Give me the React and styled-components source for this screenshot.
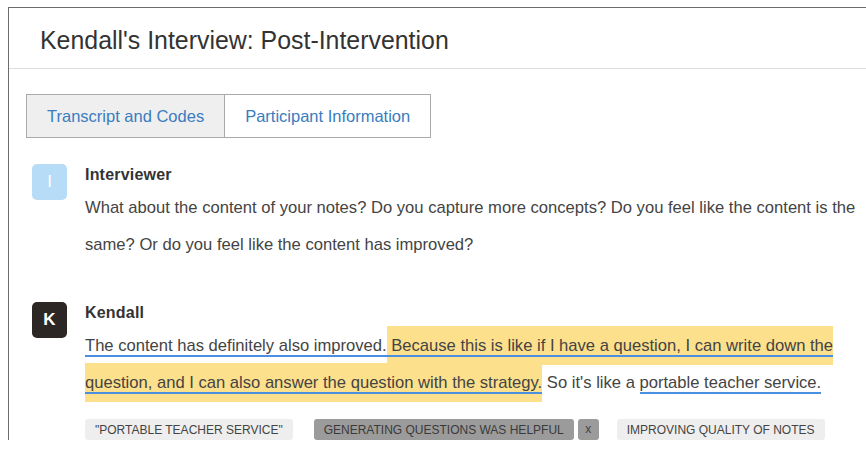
import React from "react";
import styled, { createGlobalStyle } from "styled-components";

const GlobalStyle = createGlobalStyle`
  html, body {
    margin: 0;
    background: #fff;
    overflow: hidden;
  }
  body {
    padding: 7px 0 0 8px;
    font-family: "Liberation Sans", Arial, sans-serif;
    color: #444;
  }
`;

const Card = styled.section`
  width: 900px;
  border: 1px solid #6b6b6b;
  border-right: none;
  border-bottom: none;
  background: #fff;
`;

const Header = styled.header`
  height: 61px;
  display: flex;
  align-items: center;
  padding: 4px 31px 0;
  box-sizing: border-box;
  border-bottom: 1px solid #ddd;
`;

const Title = styled.h1`
  margin: 0;
  font-size: 24.9px;
  font-weight: normal;
  color: #333;
`;

const Body = styled.div`
  padding: 25px 0 0 17px;
`;

const Tabs = styled.nav`
  display: flex;
`;

const Tab = styled.button`
  height: 44px;
  padding: 0 20px;
  margin-left: ${(p) => (p.$first ? "0" : "-1px")};
  border: 1px solid #aaa;
  background: ${(p) => (p.$active ? "#efefef" : "#fff")};
  color: #3a7cc0;
  font-family: inherit;
  font-size: 16.5px;
  cursor: pointer;
`;

const Turn = styled.div`
  display: flex;
  gap: 18px;
  padding: 0 29px 0 6px;
  margin-top: ${(p) => p.$top}px;
`;

const Avatar = styled.div`
  flex: none;
  width: 35px;
  height: 36px;
  border-radius: 5px;
  display: flex;
  align-items: center;
  justify-content: center;
  background: ${(p) => p.$bg};
  color: #fff;
  font-size: 17px;
  font-weight: ${(p) => (p.$bold ? "bold" : "normal")};
`;

const Content = styled.div`
  flex: 1;
  min-width: 0;
`;

const Speaker = styled.div`
  font-size: 16px;
  font-weight: bold;
  color: #333;
  line-height: 22px;
  letter-spacing: 0.2px;
`;

const Speech = styled.p`
  margin: 3px 0 0;
  font-size: 16.6px;
  line-height: 37px;
  color: #444;
`;

const Mark = styled.span`
  background: #fde08c;
  padding: 10px 0;
`;

const Coded = styled.span`
  border-bottom: 2px solid #4a8fe0;
`;

const TagRow = styled.div`
  display: flex;
  align-items: center;
  margin-top: 18px;
`;

const Tag = styled.span`
  height: 21px;
  display: inline-flex;
  align-items: center;
  padding: 0 10px;
  margin-right: ${(p) => (p.$attached ? "4px" : "21px")};
  border-radius: 3px;
  background: ${(p) => (p.$selected ? "#9b9b9b" : "#eeeeee")};
  color: ${(p) => (p.$selected ? "#3a3a3a" : "#444")};
  font-size: 12px;
  text-transform: uppercase;
  white-space: nowrap;
`;

const Remove = styled.button`
  width: 21px;
  height: 21px;
  padding: 0 0 2px;
  margin-right: 18px;
  border: none;
  border-radius: 3px;
  background: #9b9b9b;
  color: #444;
  font-family: inherit;
  font-size: 12px;
  cursor: pointer;
`;

export default function App() {
  return (
    <>
      <GlobalStyle />
      <Card>
        <Header>
          <Title>Kendall's Interview: Post-Intervention</Title>
        </Header>
        <Body>
          <Tabs>
            <Tab $first $active>Transcript and Codes</Tab>
            <Tab>Participant Information</Tab>
          </Tabs>

          <Turn $top={26}>
            <Avatar $bg="#b6dcf7">I</Avatar>
            <Content>
              <Speaker>Interviewer</Speaker>
              <Speech>
                What about the content of your notes? Do you capture more concepts? Do you feel like
                the content is the same? Or do you feel like the content has improved?
              </Speech>
            </Content>
          </Turn>

          <Turn $top={39}>
            <Avatar $bg="#2c2624" $bold>K</Avatar>
            <Content>
              <Speaker>Kendall</Speaker>
              <Speech>
                <Coded>The content has definitely also improved.</Coded>
                <Mark>
                  <Coded>
                    {" "}Because this is like if I have a question, I can write down the question, and I
                    can also answer the question with the strategy.
                  </Coded>
                </Mark>{" "}
                So it's like a <Coded>portable teacher service.</Coded>
              </Speech>
              <TagRow>
                <Tag>"Portable teacher service"</Tag>
                <Tag $selected $attached>Generating questions was helpful</Tag>
                <Remove>x</Remove>
                <Tag>Improving quality of notes</Tag>
              </TagRow>
            </Content>
          </Turn>
        </Body>
      </Card>
    </>
  );
}
